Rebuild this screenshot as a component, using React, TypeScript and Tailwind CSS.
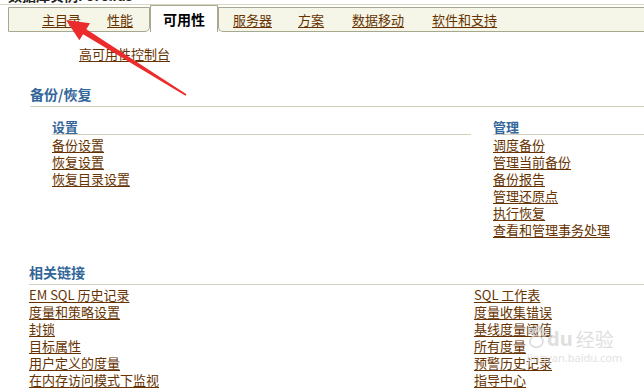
import React from "react";

const font = { fontFamily: '"Noto Sans CJK SC", "Noto Sans", sans-serif' };

function L({ children }: { children: React.ReactNode }) {
  return (
    <div className="h-[17px] leading-[17px] whitespace-nowrap">
      <a className="text-[#663300] underline underline-offset-2 decoration-[#663300] cursor-pointer">{children}</a>
    </div>
  );
}

export default function App() {
  const left1 = ["备份设置", "恢复设置", "恢复目录设置"];
  const right1 = ["调度备份", "管理当前备份", "备份报告", "管理还原点", "执行恢复", "查看和管理事务处理"];
  const left2 = ["EM SQL 历史记录", "度量和策略设置", "封锁", "目标属性", "用户定义的度量", "在内存访问模式下监视"];
  const right2 = ["SQL 工作表", "度量收集错误", "基线度量阈值", "所有度量", "预警历史记录", "指导中心"];

  return (
    <div className="relative w-[644px] h-[388px] overflow-hidden bg-white text-[13px]" style={font}>
      {/* cut-off title */}
      <div className="h-[5px] border-b border-[#d8d8c4] overflow-hidden">
        <div className="-mt-[13px] ml-[8px] text-[14px] font-bold leading-[16px] text-[#222]">数据库实例: orcl.us</div>
      </div>

      {/* tabs */}
      <div className="mt-[2px] ml-[8px] flex h-[25px]">
        <div className="flex items-center h-[25px] bg-[#f6f6e8] border-y border-l border-r border-[#a8a890] rounded-br-[5px] pl-[33px] pr-[16px] gap-[26px]">
          <a className="text-[#663300] underline underline-offset-2">主目录</a>
          <a className="text-[#663300] underline underline-offset-2">性能</a>
        </div>
        <div className="-mt-[2px] h-[27px] flex items-center justify-center w-[68px] bg-white border-x border-t border-[#a8a890] text-[14px] font-bold text-black">
          可用性
        </div>
        <div className="flex-1 flex items-center h-[25px] bg-[#f6f6e8] border-y border-l border-[#a8a890] rounded-bl-[5px] pl-[14px]">
          <a className="text-[#663300] underline underline-offset-2">服务器</a>
          <a className="ml-[26px] text-[#663300] underline underline-offset-2">方案</a>
          <a className="ml-[28px] text-[#663300] underline underline-offset-2">数据移动</a>
          <a className="ml-[28px] text-[#663300] underline underline-offset-2">软件和支持</a>
        </div>
      </div>

      <div className="ml-[79px] mt-[13px] h-[17px] leading-[17px]">
        <a className="text-[#663300] underline underline-offset-2">高可用性控制台</a>
      </div>

      {/* 备份/恢复 */}
      <div className="ml-[30px] mt-[21px] border-b border-[#d2d2bc] h-[24px] leading-[22px] text-[14px] font-bold text-[#336699]">
        备份/恢复
      </div>
      <div className="flex mt-[11px]">
        <div className="ml-[52px] w-[419px]">
          <div className="h-[17px] leading-[17px] border-b border-[#d2d2bc] font-semibold text-[#336699]">设置</div>
          <div className="mt-[1px]">
            {left1.map((t) => (
              <L key={t}>{t}</L>
            ))}
          </div>
        </div>
        <div className="ml-[22px] flex-1">
          <div className="h-[17px] leading-[17px] border-b border-[#d2d2bc] font-semibold text-[#336699]">管理</div>
          <div className="mt-[1px]">
            {right1.map((t) => (
              <L key={t}>{t}</L>
            ))}
          </div>
        </div>
      </div>

      {/* 相关链接 */}
      <div className="ml-[29px] mt-[23px] border-b border-[#d2d2bc] h-[24px] leading-[22px] text-[14px] font-bold text-[#336699]">
        相关链接
      </div>
      <div className="flex mt-[1px]">
        <div className="ml-[29px] w-[445px]">
          {left2.map((t) => (
            <L key={t}>{t}</L>
          ))}
        </div>
        <div>
          {right2.map((t) => (
            <L key={t}>{t}</L>
          ))}
        </div>
      </div>

      {/* watermark */}
      <div className="absolute left-[527px] top-[326px] pointer-events-none select-none opacity-80">
        <div className="flex items-end">
          <svg width="20" height="24" viewBox="0 0 34 40">
            <g fill="none" stroke="#d6d6d6" strokeWidth="3">
              <circle cx="8" cy="8" r="4" />
              <circle cx="20" cy="5" r="4" />
              <circle cx="29" cy="13" r="3.5" />
              <ellipse cx="16" cy="26" rx="11" ry="10" />
            </g>
          </svg>
          <span className="text-[20px] leading-[22px] font-bold text-[#d8d8d8]" style={{ fontFamily: '"Noto Sans", sans-serif' }}>du</span>
          <span className="ml-[3px] text-[19px] leading-[22px] text-[#d8d8d8]">经验</span>
        </div>
        <div className="mt-[2px] text-[11px] leading-[12px] text-[#dcdcdc]" style={{ fontFamily: '"Noto Sans", sans-serif' }}>
          jingyan.baidu.com
        </div>
      </div>

      {/* red arrow */}
      <svg className="absolute left-0 top-0 pointer-events-none" width="644" height="388">
        <polygon
          points="66,20 90,23.2 86.3,29.2 186.5,94.2 185.5,95.8 83.1,34.2 79.4,40.2"
          fill="#ec2c2c"
        />
      </svg>
    </div>
  );
}
